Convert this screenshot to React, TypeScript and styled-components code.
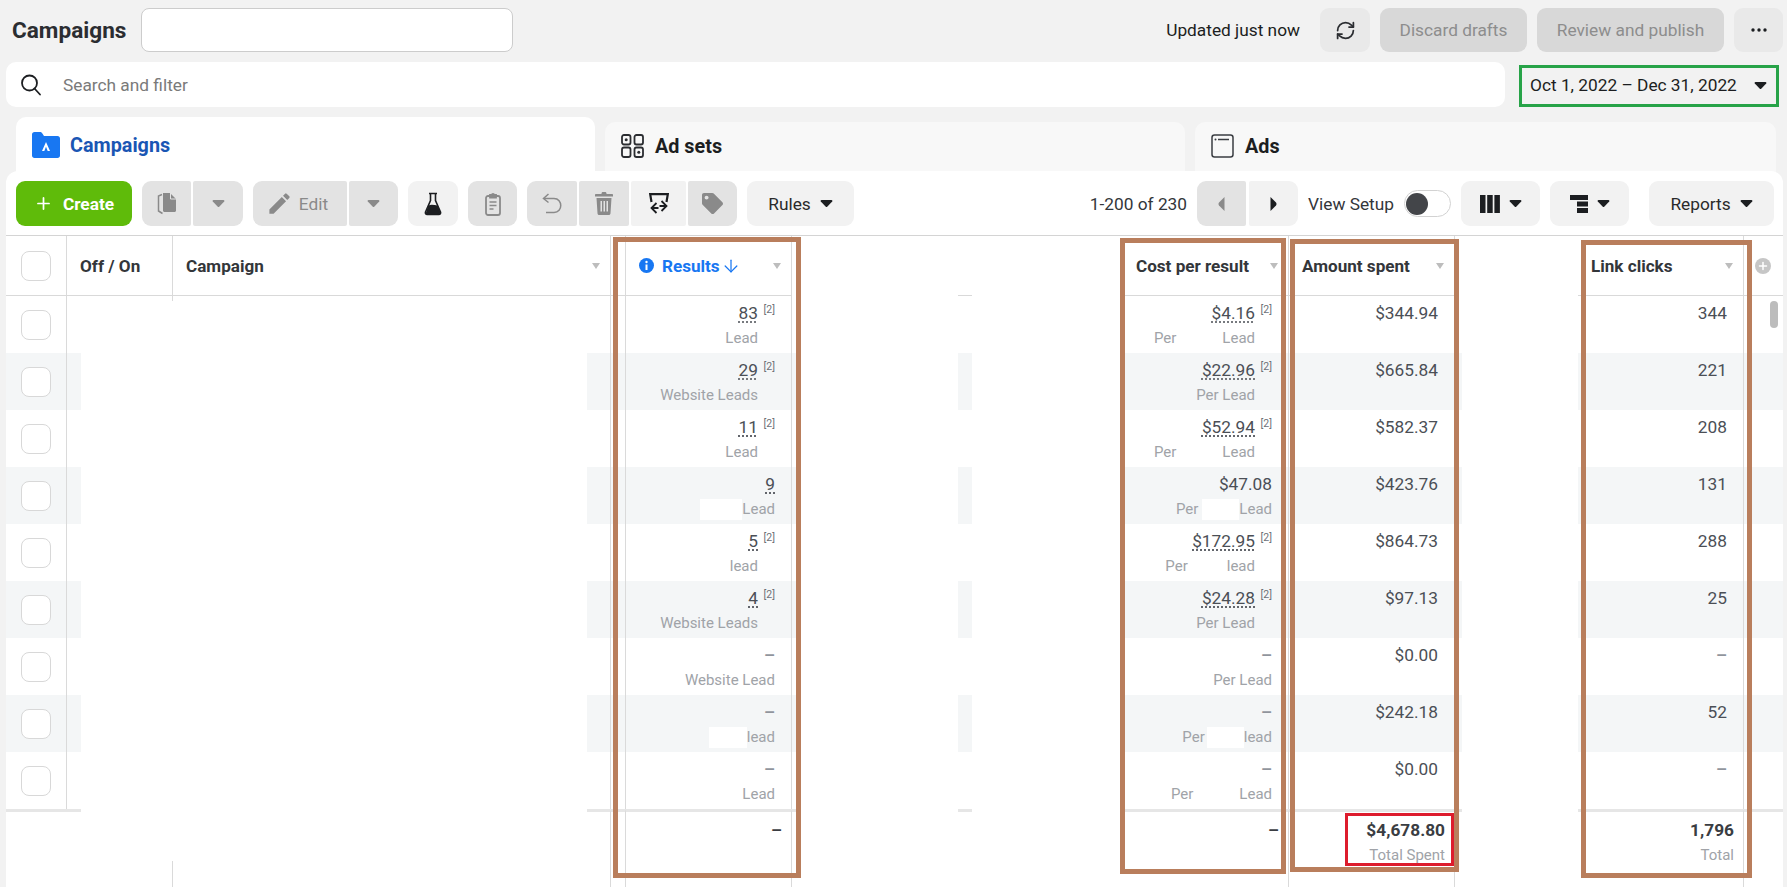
import React from 'react';
import styled, { createGlobalStyle } from 'styled-components';
import { RefreshCw, ArrowDown, Plus } from 'lucide-react';
import { FaTag } from 'react-icons/fa';
import { MdEdit } from 'react-icons/md';

const BODY_COLS =
  '61px 14px 506px 24px 15px 166px 4px 162px 14px 149px 2px 166px 166px 7px 116px 166px 39px';
const HEAD_COLS =
  '61px 106px 438px 15px 166px 166px 14px 149px 2px 166px 166px 123px 166px 39px';
const LINE = '#dadada';

const GlobalStyle = createGlobalStyle`
  html, body {
    margin: 0;
    padding: 0;
    height: 887px;
    overflow: hidden;
    background: #f2f2f2;
    font-family: Roboto, "Liberation Sans", sans-serif;
    color: #1c1e21;
  }
`;

const Page = styled.div`
  width: 1787px;
  height: 887px;
  overflow: hidden;
  display: flex;
  flex-direction: column;
`;

const TopBar = styled.div`
  display: flex;
  align-items: center;
  height: 44px;
  margin-top: 8px;
  padding: 0 4px 0 12px;
`;

const Title = styled.div`
  font-size: 22.6px;
  font-weight: 700;
  color: #2b2d31;
  width: 129px;
`;

const NameInput = styled.div`
  width: 370px;
  height: 42px;
  background: #fff;
  border: 1px solid #ccc;
  border-radius: 8px;
`;

const Updated = styled.div`
  margin-left: auto;
  font-size: 17.3px;
  margin-right: 20px;
`;

const TopButton = styled.div<{ $w: number; $off?: boolean }>`
  width: ${(p) => p.$w}px;
  height: 44px;
  margin-left: ${(p) => (p.$off ? 10 : 0)}px;
  border-radius: 9px;
  background: ${(p) => (p.$off ? '#d8d8d8' : '#e9e9e9')};
  color: #8d8d8d;
  font-size: 17.3px;
  display: flex;
  align-items: center;
  justify-content: center;
  & + & {
    margin-left: 10px;
  }
`;

const SearchRow = styled.div`
  display: flex;
  align-items: center;
  margin-top: 10px;
  padding-left: 6px;
  height: 45px;
`;

const SearchBox = styled.div`
  width: 1499px;
  height: 45px;
  background: #fff;
  border-radius: 10px;
  display: flex;
  align-items: center;
  padding-left: 14px;
  box-sizing: border-box;
  gap: 21px;
  color: #7a7a7a;
  font-size: 17.3px;
`;

const DateBox = styled.div`
  margin-left: 14px;
  width: 260px;
  height: 42px;
  margin-top: 3px;
  box-sizing: border-box;
  border: 3px solid #27a348;
  display: flex;
  align-items: center;
  justify-content: space-between;
  padding: 0 9px 2px 8px;
  font-size: 17.3px;
`;

const Tabs = styled.div`
  display: flex;
  align-items: flex-end;
  gap: 10px;
  height: 64px;
  margin-top: 10px;
  padding-left: 16px;
  margin-bottom: -10px;
`;

const Tab = styled.div<{ $active?: boolean; $w: number }>`
  width: ${(p) => p.$w}px;
  height: ${(p) => (p.$active ? 64 : 59)}px;
  box-sizing: border-box;
  background: ${(p) => (p.$active ? '#fff' : '#f8f8f8')};
  border-radius: 10px 10px 0 0;
  display: flex;
  align-items: flex-start;
  gap: ${(p) => (p.$active ? 10 : 11)}px;
  padding: ${(p) => (p.$active ? '15px 0 0 16px' : '12px 0 0 16px')};
  font-size: 19.8px;
  font-weight: 700;
  line-height: 24px;
  color: ${(p) => (p.$active ? '#1a56b4' : '#1c1e21')};
`;

const TabLabel = styled.span<{ $active?: boolean }>`
  margin-top: ${(p) => (p.$active ? 2 : 1)}px;
`;

const Panel = styled.div`
  position: relative;
  margin-left: 6px;
  width: 1777px;
  flex: 1;
  background: #fff;
  border-radius: 12px 12px 0 0;
  overflow: hidden;
`;

const Toolbar = styled.div`
  display: flex;
  align-items: flex-start;
  height: 65px;
  padding: 10px 9px 0 10px;
  box-sizing: border-box;
  border-bottom: 1.5px solid #d4d4d4;
  gap: 10px;
`;

const Group = styled.div<{ $gap?: number }>`
  display: flex;
  gap: ${(p) => p.$gap || 2}px;
`;

const Tool = styled.div<{ $w: number; $tone?: 'off' | 'light'; $join?: 'l' | 'r' }>`
  width: ${(p) => p.$w}px;
  height: 45px;
  box-sizing: border-box;
  display: flex;
  align-items: center;
  justify-content: center;
  gap: 9px;
  font-size: 17.3px;
  background: ${(p) => (p.$tone === 'off' ? '#e3e3e3' : '#f2f2f2')};
  color: ${(p) => (p.$tone === 'off' ? '#8a8a8a' : '#2a2a2a')};
  border-radius: ${(p) =>
    p.$join === 'l' ? '9px 2px 2px 9px' : p.$join === 'r' ? '2px 9px 9px 2px' : '9px'};
`;

const MidTool = styled(Tool)`
  border-radius: 2px;
`;

const EditTool = styled(Tool)`
  gap: 6px;
  padding-right: 6px;
`;

const ReportsTool = styled(Tool)`
  margin-left: 10px;
`;

const CreateButton = styled.div`
  width: 116px;
  height: 45px;
  border-radius: 9px;
  background: #5fbb0a;
  color: #fff;
  font-size: 17.3px;
  font-weight: 700;
  display: flex;
  align-items: center;
  justify-content: center;
  gap: 10px;
`;

const RightTools = styled.div`
  margin-left: auto;
  display: flex;
  align-items: center;
  gap: 10px;
  height: 45px;
  font-size: 17.3px;
  color: #33363a;
`;

const Switch = styled.div`
  width: 47px;
  height: 27px;
  box-sizing: border-box;
  border: 1px solid #d2d2d2;
  border-radius: 14px;
  display: flex;
  align-items: center;
  padding-left: 1px;
  &::before {
    content: '';
    width: 22px;
    height: 22px;
    border-radius: 50%;
    background: #434549;
  }
`;

const Table = styled.div`
  display: flex;
  flex-direction: column;
`;

const HeadRow = styled.div`
  display: grid;
  grid-template-columns: ${HEAD_COLS};
  height: 60px;
`;

const Head = styled.div<{ $line?: boolean; $blue?: boolean; $under?: boolean }>`
  box-sizing: border-box;
  display: flex;
  align-items: center;
  gap: 5px;
  padding: 0 10px 0 13px;
  font-size: 17.1px;
  font-weight: 700;
  white-space: nowrap;
  color: ${(p) => (p.$blue ? '#1877f2' : '#33363a')};
  border-right: ${(p) => (p.$line ? `1px solid ${LINE}` : 'none')};
  border-bottom: ${(p) => (p.$under === false ? 'none' : '1.5px solid #d9d9d9')};
`;

const HeadGap = styled(Head)`
  padding: 0;
`;

const ToggleHead = styled(Head)`
  position: relative;
  &::after {
    content: '';
    position: absolute;
    right: -1px;
    bottom: -6px;
    width: 1px;
    height: 5px;
    background: ${LINE};
  }
`;

const Checkbox = styled.div`
  width: 30px;
  height: 30px;
  box-sizing: border-box;
  background: #fff;
  border: 1px solid #d8d8d8;
  border-radius: 8px;
`;

const CheckCell = styled(Head)`
  padding: 0 0 0 15px;
`;

const SortMark = styled.span`
  margin-left: auto;
  flex: none;
  width: 0;
  height: 0;
  border-left: 4.5px solid transparent;
  border-right: 4.5px solid transparent;
  border-top: 6px solid #bdbdbd;
`;

const InfoWrap = styled.span`
  display: flex;
  margin-right: 3px;
`;

const SortArrow = styled.span`
  display: flex;
  margin-left: -4px;
`;

const AddColumn = styled.div`
  width: 16px;
  height: 16px;
  margin-left: 11px;
  flex: none;
  border-radius: 50%;
  background: #c6c6c6;
  color: #fff;
  display: flex;
  align-items: center;
  justify-content: center;
`;

const Row = styled.div<{ $odd: boolean }>`
  display: grid;
  grid-template-columns: ${BODY_COLS};
  height: 57px;
  background: ${(p) => (p.$odd ? '#f4f6f7' : '#fff')};
`;

const Seg = styled.div<{ $line?: boolean }>`
  box-sizing: border-box;
  border-right: ${(p) => (p.$line ? `1px solid ${LINE}` : 'none')};
`;

const Mask = styled.div`
  background: #fff;
`;

const RowCheck = styled(Seg)`
  display: flex;
  align-items: center;
  padding-left: 15px;
`;

const DataCell = styled(Seg)`
  display: flex;
  flex-direction: column;
  align-items: flex-end;
  padding: 7px 16px 0 0;
`;

const Main = styled.div`
  display: flex;
  align-items: flex-start;
  height: 20px;
  line-height: 20px;
  font-size: 17.3px;
  color: #4b4f56;
`;

const Value = styled.span<{ $dotted?: boolean }>`
  text-decoration: ${(p) => (p.$dotted ? 'underline dotted #4b4f56' : 'none')};
  text-underline-offset: 3px;
`;

const Note = styled.span`
  width: 17px;
  text-align: right;
  font-size: 10.5px;
  line-height: 14px;
  color: #6d7178;
`;

const Dash = styled.span`
  color: #90949c;
  font-weight: 700;
`;

const Sub = styled.div<{ $pad?: number }>`
  display: flex;
  align-items: center;
  margin-top: 5px;
  height: 20px;
  font-size: 15px;
  color: #a0a3a8;
  padding-right: ${(p) => p.$pad || 0}px;
`;

const Blank = styled.span<{ $w: number }>`
  display: inline-block;
  width: ${(p) => p.$w}px;
  height: 21px;
  background: #fff;
`;

const Gap = styled.span<{ $w: number }>`
  display: inline-block;
  width: ${(p) => p.$w}px;
`;

const FootRow = styled.div`
  display: grid;
  grid-template-columns: ${BODY_COLS};
  height: 78px;
  background: #fff;
`;

const FootSeg = styled(Seg)<{ $rule?: boolean }>`
  border-top: ${(p) => (p.$rule ? '3px solid #e6e6e6' : 'none')};
`;

const FootMask = styled.div`
  position: relative;
  &::after {
    content: '';
    position: absolute;
    left: 91px;
    bottom: 0;
    height: 26px;
    width: 1px;
    background: ${LINE};
  }
`;

const FootCell = styled(FootSeg)`
  display: flex;
  flex-direction: column;
  align-items: flex-end;
  padding: 8px 9px 0 0;
`;

const Total = styled.div`
  height: 20px;
  line-height: 20px;
  font-size: 17.3px;
  font-weight: 700;
  color: #3a3d42;
`;

const TotalLabel = styled.div`
  margin-top: 5px;
  height: 20px;
  line-height: 20px;
  font-size: 15px;
  color: #a0a3a8;
`;

const Annotation = styled.div<{ $x: number; $y: number; $w: number; $h: number; $red?: boolean }>`
  position: absolute;
  left: ${(p) => p.$x - 6}px;
  top: ${(p) => p.$y - 171}px;
  width: ${(p) => p.$w}px;
  height: ${(p) => p.$h}px;
  box-sizing: border-box;
  pointer-events: none;
  border: ${(p) => (p.$red ? '3px solid #dd1c2d' : '5.5px solid #b97e5c')};
`;

const ScrollThumb = styled.div`
  position: absolute;
  left: 1764px;
  top: 130px;
  width: 8px;
  height: 27px;
  border-radius: 4px;
  background: #bcbcbc;
`;

const Caret = ({ color = '#1c1e21' }: { color?: string }) => (
  <svg width="13" height="9" viewBox="0 0 13 9">
    <path d="M1.5 1h10c.8 0 1.2.9.7 1.5L7.2 7.8c-.4.4-1 .4-1.4 0L.8 2.5C.3 1.9.7 1 1.5 1z" fill={color} />
  </svg>
);

const SearchIcon = () => (
  <svg width="22" height="22" viewBox="0 0 22 22" fill="none" stroke="#1c1e21" strokeWidth="1.8">
    <circle cx="9.5" cy="9" r="7.5" />
    <path d="M14.5 14.5L20 20.5" strokeLinecap="round" />
  </svg>
);

const FolderIcon = () => (
  <svg width="28" height="26" viewBox="0 0 28 26">
    <path
      d="M0 2.5C0 1 1 0 2.5 0H8c1 0 1.6.5 2.2 1.3L12 4h13.5C27 4 28 5 28 6.5v17c0 1.5-1 2.5-2.5 2.5h-23C1 26 0 25 0 23.5z"
      fill="#1877f2"
    />
    <path d="M14 10l4 9h-2.3L14 14.8 12.3 19H10z" fill="#fff" />
  </svg>
);

const AdSetsIcon = () => (
  <svg width="23" height="24" viewBox="0 0 23 24" fill="none" stroke="#2b2d31" strokeWidth="1.8">
    <rect x="1" y="1" width="8.5" height="9.5" rx="2" />
    <rect x="13.5" y="1" width="8.5" height="9.5" rx="2" />
    <rect x="1" y="13.5" width="8.5" height="9.5" rx="2" />
    <rect x="13.5" y="13.5" width="8.5" height="9.5" rx="2" />
    <circle cx="5.2" cy="5.7" r="1.5" fill="#2b2d31" stroke="none" />
    <circle cx="17.8" cy="18.3" r="1.5" fill="#2b2d31" stroke="none" />
  </svg>
);

const AdsIcon = () => (
  <svg width="23" height="24" viewBox="0 0 23 24" fill="none" stroke="#3a3d42" strokeWidth="1.5">
    <rect x="1" y="1" width="21" height="22" rx="2.5" />
    <path d="M7 5.5h11" />
    <circle cx="4.5" cy="5.5" r="1" fill="#3a3d42" stroke="none" />
  </svg>
);

const CopyIcon = () => (
  <svg width="20" height="24" viewBox="0 0 20 24" fill="none">
    <path d="M5 2.5L1.5 4v15l4 2.5" stroke="#8a8a8a" strokeWidth="1.5" />
    <path d="M6 1h7l6 6v11.5c0 .8-.7 1.5-1.5 1.5H7.5C6.7 20 6 19.3 6 18.5z" fill="#8a8a8a" />
    <path d="M13.5 1v6h5.5" stroke="#e3e3e3" strokeWidth="1" />
  </svg>
);

const FlaskIcon = () => (
  <svg width="18" height="24" viewBox="0 0 18 24" fill="none">
    <path
      d="M5 1.5h8M6.5 1.5v7L1.5 20c-.5 1.3.4 2.5 1.7 2.5h11.6c1.3 0 2.2-1.2 1.7-2.5l-5-11.5v-7"
      stroke="#1c1e21"
      strokeWidth="1.6"
    />
    <path d="M4.3 13.5c3-1.5 6-.5 9.4 0l2.8 7c.4 1.1-.4 2-1.5 2H3.500c-1.100 0-1.900-.9-1.500-2z" fill="#1c1e21" />
  </svg>
);

const ClipboardIcon = () => (
  <svg width="16" height="24" viewBox="0 0 16 24" fill="none" stroke="#8a8a8a" strokeWidth="1.8">
    <rect x="1" y="4" width="14" height="19" rx="2" />
    <path d="M5 5.5V3h1.8C7 1.5 9 1.5 9.2 3H11v2.5z" fill="#8a8a8a" />
    <path d="M4.5 10h7M4.5 13.5h7M4.5 17h4" strokeWidth="1.5" />
  </svg>
);

const UndoIcon = () => (
  <svg width="20" height="22" viewBox="0 0 20 22" fill="none" stroke="#8a8a8a" strokeWidth="1.5">
    <path d="M6.5 1L1.5 5.5l5 4" />
    <path d="M2 5.5h10c9 0 9 14 0 14H4" />
  </svg>
);

const TrashIcon = () => (
  <svg width="18" height="23" viewBox="0 0 18 23" fill="#8a8a8a">
    <path d="M6.5 1.5C6.5.6 7 0 8 0h2c1 0 1.5.6 1.5 1.5V2H17c.6 0 1 .4 1 1v1.500H0V3c0-.6.4-1 1-1h5.500z" />
    <path
      d="M1.5 6h15l-1 15.200c0 1-.8 1.800-1.800 1.800H4.300c-1 0-1.800-.8-1.800-1.800zM5.500 9v10.500H7V9zm3 0v10.500H10V9zm3 0v10.500H13V9z"
      fillRule="evenodd"
    />
  </svg>
);

const SwapIcon = () => (
  <svg width="20" height="21" viewBox="0 0 20 21" fill="none" stroke="#1c1e21" strokeWidth="1.8">
    <path d="M2.5 9L1.2 1.2h17.600L17.500 9" strokeWidth="2.200" />
    <path d="M7.500 10L2.500 15l5 5M2.800 15H9.500" />
    <path d="M12.500 8l5 5-5 5M17.200 13H10.500" />
  </svg>
);

const DotsIcon = () => (
  <svg width="16" height="4" viewBox="0 0 16 4" fill="#1c1e21">
    <circle cx="2" cy="2" r="1.7" />
    <circle cx="8" cy="2" r="1.7" />
    <circle cx="14" cy="2" r="1.7" />
  </svg>
);

const InfoIcon = () => (
  <svg width="15" height="15" viewBox="0 0 15 15">
    <circle cx="7.5" cy="7.5" r="7.5" fill="#1877f2" />
    <rect x="6.5" y="6.5" width="2" height="5.5" fill="#fff" />
    <circle cx="7.5" cy="4" r="1.2" fill="#fff" />
  </svg>
);

const Pointer = ({ left, color }: { left?: boolean; color: string }) => (
  <svg width="7" height="14" viewBox="0 0 7 14">
    <path d={left ? 'M6.5 0v14L1 8.5C.3 7.7.3 6.3 1 5.5z' : 'M.5 0v14L6 8.5c.7-.8.7-2.2 0-3z'} fill={color} />
  </svg>
);

const ColumnsIcon = () => (
  <svg width="20" height="18" viewBox="0 0 20 18" fill="#1c1e21">
    <rect x="0" y="0" width="5.5" height="18" />
    <rect x="7.2" y="0" width="5.5" height="18" />
    <rect x="14.4" y="0" width="5.5" height="18" />
  </svg>
);

const BreakdownIcon = () => (
  <svg width="18" height="18" viewBox="0 0 18 18" fill="#1c1e21">
    <rect x="0" y="0" width="18" height="5" />
    <rect x="7" y="6.5" width="11" height="5" />
    <rect x="7" y="13" width="11" height="5" />
  </svg>
);

type Part = { per?: number; gap?: number; blank?: number; word: string };

const Label = ({ per, gap, blank, word, pad }: Part & { pad: number }) => (
  <Sub $pad={pad}>
    {per ? 'Per' : ''}
    {gap ? <Gap $w={gap} /> : null}
    {blank ? <Blank $w={blank} /> : null}
    {word}
  </Sub>
);

type RowData = {
  results: string;
  resultsNote?: boolean;
  resultsLabel: Part;
  cost: string;
  costNote?: boolean;
  costLabel: Part;
  spent: string;
  clicks: string;
};

const ROWS: RowData[] = [
  { results: '83', resultsNote: true, resultsLabel: { word: 'Lead' }, cost: '$4.16', costNote: true, costLabel: { per: 1, gap: 46, word: 'Lead' }, spent: '$344.94', clicks: '344' },
  { results: '29', resultsNote: true, resultsLabel: { word: 'Website Leads' }, cost: '$22.96', costNote: true, costLabel: { word: 'Per Lead' }, spent: '$665.84', clicks: '221' },
  { results: '11', resultsNote: true, resultsLabel: { word: 'Lead' }, cost: '$52.94', costNote: true, costLabel: { per: 1, gap: 46, word: 'Lead' }, spent: '$582.37', clicks: '208' },
  { results: '9', resultsLabel: { blank: 42, word: 'Lead' }, cost: '$47.08', costLabel: { per: 1, gap: 4, blank: 37, word: 'Lead' }, spent: '$423.76', clicks: '131' },
  { results: '5', resultsNote: true, resultsLabel: { word: 'lead' }, cost: '$172.95', costNote: true, costLabel: { per: 1, gap: 39, word: 'lead' }, spent: '$864.73', clicks: '288' },
  { results: '4', resultsNote: true, resultsLabel: { word: 'Website Leads' }, cost: '$24.28', costNote: true, costLabel: { word: 'Per Lead' }, spent: '$97.13', clicks: '25' },
  { results: '–', resultsLabel: { word: 'Website Lead' }, cost: '–', costLabel: { word: 'Per Lead' }, spent: '$0.00', clicks: '–' },
  { results: '–', resultsLabel: { blank: 38, word: 'lead' }, cost: '–', costLabel: { per: 1, gap: 2, blank: 37, word: 'lead' }, spent: '$242.18', clicks: '52' },
  { results: '–', resultsLabel: { word: 'Lead' }, cost: '–', costLabel: { per: 1, gap: 46, word: 'Lead' }, spent: '$0.00', clicks: '–' },
];

const ANNOTATIONS = [
  { x: 613, y: 237, w: 188, h: 641 },
  { x: 1120, y: 238, w: 166, h: 636 },
  { x: 1290, y: 239, w: 169, h: 633 },
  { x: 1581, y: 240, w: 171, h: 638 },
];

const Amount = ({ text, note }: { text: string; note?: boolean }) => (
  <Main>
    {text === '–' ? <Dash>{text}</Dash> : <Value $dotted={note || text === '9'}>{text}</Value>}
    {note ? <Note>[2]</Note> : null}
  </Main>
);

export default function App() {
  return (
    <Page>
      <GlobalStyle />
      <TopBar>
        <Title>Campaigns</Title>
        <NameInput />
        <Updated>Updated just now</Updated>
        <TopButton $w={50}>
          <RefreshCw size={21} color="#2b2d31" strokeWidth={2} />
        </TopButton>
        <TopButton $w={147} $off>Discard drafts</TopButton>
        <TopButton $w={187} $off>Review and publish</TopButton>
        <TopButton $w={49}>
          <DotsIcon />
        </TopButton>
      </TopBar>
      <SearchRow>
        <SearchBox>
          <SearchIcon />
          Search and filter
        </SearchBox>
        <DateBox>
          Oct 1, 2022 – Dec 31, 2022
          <Caret />
        </DateBox>
      </SearchRow>
      <Tabs>
        <Tab $active $w={579}>
          <FolderIcon />
          <TabLabel $active>Campaigns</TabLabel>
        </Tab>
        <Tab $w={580}>
          <AdSetsIcon />
          <TabLabel>Ad sets</TabLabel>
        </Tab>
        <Tab $w={581}>
          <AdsIcon />
          <TabLabel>Ads</TabLabel>
        </Tab>
      </Tabs>
      <Panel>
        <Toolbar>
          <CreateButton>
            <Plus size={19} strokeWidth={2.2} />
            Create
          </CreateButton>
          <Group>
            <Tool $w={49} $tone="off" $join="l"><CopyIcon /></Tool>
            <Tool $w={50} $tone="off" $join="r"><Caret color="#8a8a8a" /></Tool>
          </Group>
          <Group>
            <EditTool $w={94} $tone="off" $join="l">
              <MdEdit size={27} color="#8a8a8a" />
              Edit
            </EditTool>
            <Tool $w={49} $tone="off" $join="r"><Caret color="#8a8a8a" /></Tool>
          </Group>
          <Tool $w={50} $tone="light"><FlaskIcon /></Tool>
          <Tool $w={49} $tone="off"><ClipboardIcon /></Tool>
          <Group>
            <Tool $w={50} $tone="off" $join="l"><UndoIcon /></Tool>
            <MidTool $w={50} $tone="off"><TrashIcon /></MidTool>
            <MidTool $w={55} $tone="light"><SwapIcon /></MidTool>
            <Tool $w={49} $tone="off" $join="r">
              <FaTag size={21} color="#8a8a8a" />
            </Tool>
          </Group>
          <Tool $w={107} $tone="light">
            Rules
            <Caret />
          </Tool>
          <RightTools>
            1-200 of 230
            <Group $gap={3}>
              <Tool $w={49} $tone="off" $join="l"><Pointer left color="#8a8a8a" /></Tool>
              <Tool $w={49} $tone="light" $join="r"><Pointer color="#1c1e21" /></Tool>
            </Group>
            View Setup
            <Switch />
            <Tool $w={79} $tone="light">
              <ColumnsIcon />
              <Caret />
            </Tool>
            <Tool $w={79} $tone="light">
              <BreakdownIcon />
              <Caret />
            </Tool>
            <ReportsTool $w={125} $tone="light">
              Reports
              <Caret />
            </ReportsTool>
          </RightTools>
        </Toolbar>
        <Table>
          <HeadRow>
            <CheckCell $line><Checkbox /></CheckCell>
            <ToggleHead $line>Off / On</ToggleHead>
            <Head $line>
              Campaign
              <SortMark />
            </Head>
            <HeadGap $line />
            <Head $line $blue>
              <InfoWrap><InfoIcon /></InfoWrap>
              Results
              <SortArrow><ArrowDown size={20} strokeWidth={1.5} /></SortArrow>
              <SortMark />
            </Head>
            <HeadGap $under={false} />
            <HeadGap />
            <HeadGap $under={false} />
            <HeadGap />
            <Head $line>
              Cost per result
              <SortMark />
            </Head>
            <Head $line>
              Amount spent
              <SortMark />
            </Head>
            <HeadGap $under={false} />
            <Head $line>
              Link clicks
              <SortMark />
            </Head>
            <HeadGap>
              <AddColumn><Plus size={12} strokeWidth={3} /></AddColumn>
            </HeadGap>
          </HeadRow>
          {ROWS.map((r, i) => (
            <Row key={r.spent + i} $odd={i % 2 === 1}>
              <RowCheck $line><Checkbox /></RowCheck>
              <Seg />
              <Mask />
              <Seg $line />
              <Seg $line />
              <DataCell $line>
                <Amount text={r.results} note={r.resultsNote} />
                <Label {...r.resultsLabel} pad={r.resultsNote ? 17 : 0} />
              </DataCell>
              <Seg />
              <Mask />
              <Seg />
              <Mask />
              <Seg />
              <DataCell $line>
                <Amount text={r.cost} note={r.costNote} />
                <Label {...r.costLabel} pad={r.costNote ? 17 : 0} />
              </DataCell>
              <DataCell $line>
                <Amount text={r.spent} />
              </DataCell>
              <Seg />
              <Mask />
              <DataCell $line>
                <Amount text={r.clicks} />
              </DataCell>
              <Seg />
            </Row>
          ))}
          <FootRow>
            <FootSeg $rule />
            <FootSeg $rule />
            <FootMask />
            <FootSeg $rule $line />
            <FootSeg $rule $line />
            <FootCell $rule $line><Total>–</Total></FootCell>
            <FootSeg $rule />
            <Mask />
            <FootSeg $rule />
            <Mask />
            <FootSeg $rule />
            <FootCell $rule $line><Total>–</Total></FootCell>
            <FootCell $rule $line>
              <Total>$4,678.80</Total>
              <TotalLabel>Total Spent</TotalLabel>
            </FootCell>
            <FootSeg $rule />
            <Mask />
            <FootCell $rule $line>
              <Total>1,796</Total>
              <TotalLabel>Total</TotalLabel>
            </FootCell>
            <FootSeg $rule />
          </FootRow>
        </Table>
        {ANNOTATIONS.map((a) => (
          <Annotation key={a.x} $x={a.x} $y={a.y} $w={a.w} $h={a.h} />
        ))}
        <Annotation $red $x={1345} $y={813} $w={109} $h={53} />
        <ScrollThumb />
      </Panel>
    </Page>
  );
}
